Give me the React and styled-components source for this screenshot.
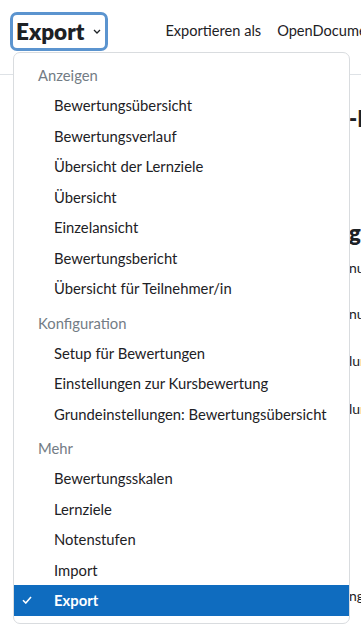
import React from 'react';
import styled, { createGlobalStyle } from 'styled-components';

const GlobalStyle = createGlobalStyle`
  html, body {
    margin: 0;
    padding: 0;
    background: #fff;
  }
  body {
    font-family: Lato, "Open Sans", sans-serif;
    color: #1d2125;
    overflow: hidden;
  }
`;

const Page = styled.div`
  position: relative;
  width: 361px;
  height: 630px;
  overflow: hidden;
`;

const TopBar = styled.div`
  display: flex;
  align-items: flex-start;
  height: 75px;
  box-sizing: border-box;
  padding: 12px 0 0 10px;
  border-bottom: 1px solid #dee2e6;
`;

const TriggerButton = styled.button`
  display: flex;
  align-items: center;
  gap: 9px;
  height: 39px;
  box-sizing: border-box;
  padding: 0 4px 0 3px;
  border: 3px solid #5b94cf;
  border-radius: 7px;
  background: #fff;
  font-family: Lato, sans-serif;
  font-weight: 800;
  font-size: 22.5px;
  color: #1d2125;
  cursor: pointer;
`;

const Separator = styled.div`
  width: 1px;
  height: 36px;
  margin: 3px 29px 0 28px;
  background: #dee2e6;
`;

const SubNav = styled.div`
  display: flex;
  gap: 16px;
  padding-top: 10px;
  font-size: 14.6px;
  white-space: nowrap;
  color: #1d2125;
`;

const Content = styled.div`
  padding-left: 349px;
  white-space: nowrap;
`;

const BackHeading = styled.div`
  font-weight: 800;
  font-size: 22px;
  margin-top: ${p => p.$mt}px;
  line-height: 26px;
`;

const BackText = styled.div`
  font-size: 14px;
  line-height: 20px;
  margin-top: ${p => p.$mt}px;
`;

const Menu = styled.div`
  position: absolute;
  left: 13px;
  top: 52px;
  width: 337px;
  box-sizing: border-box;
  background: #fff;
  border: 1px solid #d9dcdf;
  border-radius: 7px;
  padding: 8px 0 7px;
  font-size: 14.8px;
`;

const Group = styled.div`
  & + & {
    margin-top: 5px;
  }
`;

const GroupHeader = styled.div`
  height: 29px;
  line-height: 29px;
  padding-left: 24px;
  color: #737c85;
`;

const Item = styled.div`
  position: relative;
  height: 30.5px;
  line-height: 30.5px;
  padding-left: 40px;
  color: ${p => (p.$active ? '#fff' : '#1d2125')};
  background: ${p => (p.$active ? '#0f6cbf' : 'transparent')};
  font-weight: ${p => (p.$active ? 700 : 400)};
  white-space: nowrap;
`;

const Check = styled.svg`
  position: absolute;
  left: 8px;
  top: 11px;
`;

const groups = [
  {
    title: 'Anzeigen',
    items: [
      'Bewertungsübersicht',
      'Bewertungsverlauf',
      'Übersicht der Lernziele',
      'Übersicht',
      'Einzelansicht',
      'Bewertungsbericht',
      'Übersicht für Teilnehmer/in',
    ],
  },
  {
    title: 'Konfiguration',
    items: [
      'Setup für Bewertungen',
      'Einstellungen zur Kursbewertung',
      'Grundeinstellungen: Bewertungsübersicht',
    ],
  },
  {
    title: 'Mehr',
    items: ['Bewertungsskalen', 'Lernziele', 'Notenstufen', 'Import', 'Export'],
  },
];

const App = () => {
  const active = 'Export';
  return (
    <Page>
      <GlobalStyle />
      <TopBar>
        <TriggerButton>
          Export
          <svg width="8" height="5" viewBox="0 0 8 5">
            <path d="M1 1 L4 4 L7 1" fill="none" stroke="#1d2125" strokeWidth="1.3" />
          </svg>
        </TriggerButton>
        <Separator />
        <SubNav>
          <span>Exportieren als</span>
          <span>OpenDocument-Tabelle</span>
        </SubNav>
      </TopBar>
      <Content>
        <BackHeading $mt={31}>-Import</BackHeading>
        <BackHeading $mt={88}>gs</BackHeading>
        <BackText $mt={12}>nummer</BackText>
        <BackText $mt={26}>nummer</BackText>
        <BackText $mt={27}>lung</BackText>
        <BackText $mt={28}>lung</BackText>
        <BackText $mt={167}>ng</BackText>
      </Content>
      <Menu>
        {groups.map(g => (
          <Group key={g.title}>
            <GroupHeader>{g.title}</GroupHeader>
            {g.items.map(it => (
              <Item key={it} $active={it === active}>
                {it === active && (
                  <Check width="10" height="8" viewBox="0 0 10 8">
                    <path d="M1 4.2 L3.8 7 L9 1" fill="none" stroke="#fff" strokeWidth="1.6" />
                  </Check>
                )}
                {it}
              </Item>
            ))}
          </Group>
        ))}
      </Menu>
    </Page>
  );
};

export default App;
